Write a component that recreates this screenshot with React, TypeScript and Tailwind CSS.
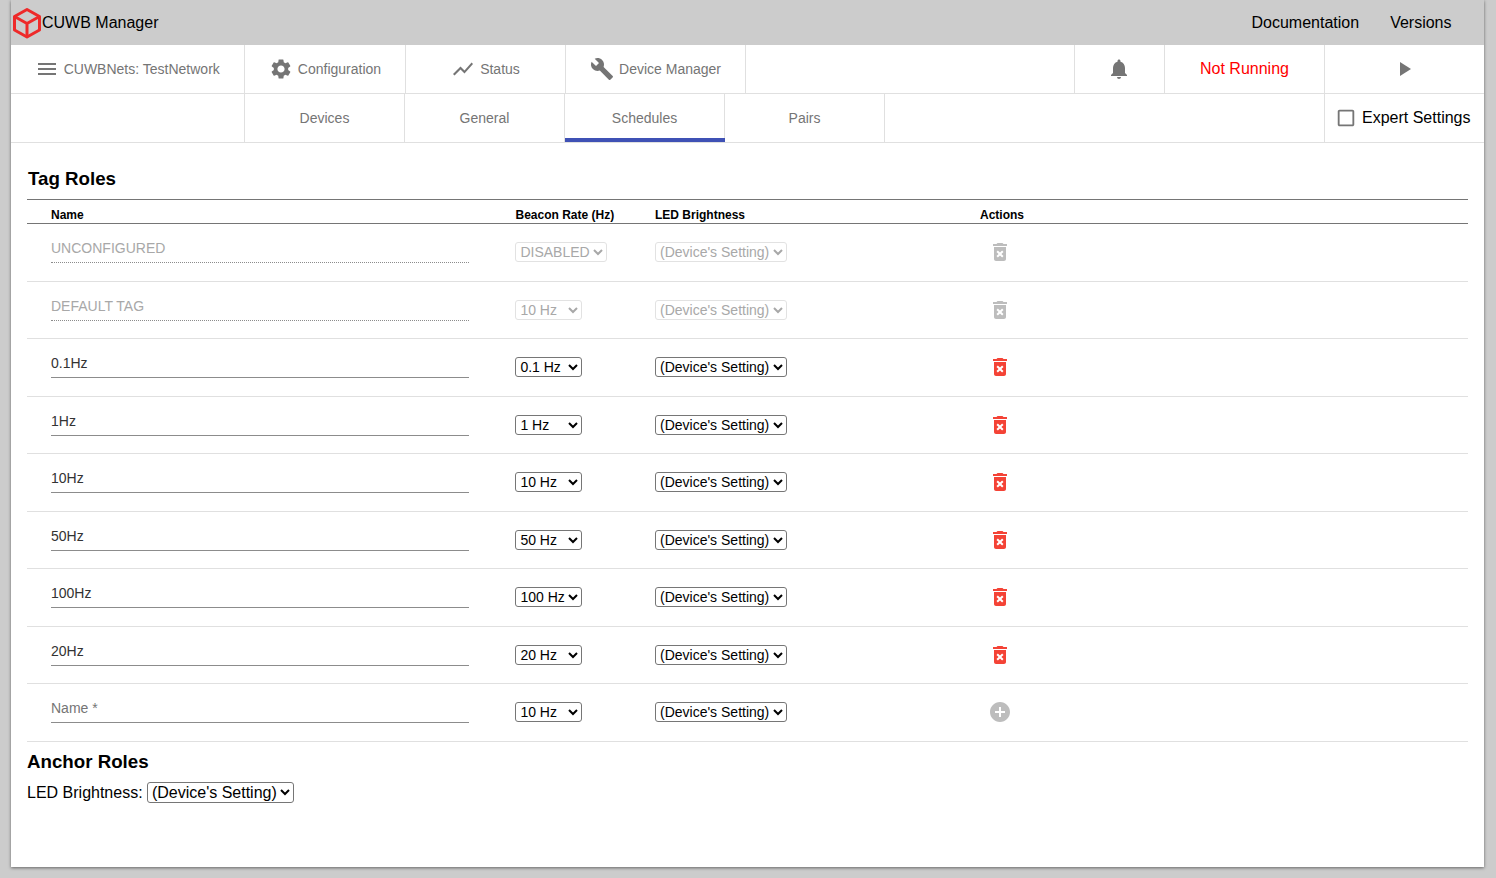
import {
  MdAddCircle,
  MdBuild,
  MdCheckBoxOutlineBlank,
  MdDeleteForever,
  MdMenu,
  MdNotifications,
  MdPlayArrow,
  MdSettings,
  MdShowChart,
} from "react-icons/md";

const RATES = ["0.1 Hz", "1 Hz", "10 Hz", "50 Hz", "100 Hz", "20 Hz"];
const LED = ["(Device's Setting)", "Off", "Low", "Medium", "High"];

const ROLES = [
  { name: "UNCONFIGURED", rate: "DISABLED", locked: true },
  { name: "DEFAULT TAG", rate: "10 Hz", locked: true },
  { name: "0.1Hz", rate: "0.1 Hz" },
  { name: "1Hz", rate: "1 Hz" },
  { name: "10Hz", rate: "10 Hz" },
  { name: "50Hz", rate: "50 Hz" },
  { name: "100Hz", rate: "100 Hz" },
  { name: "20Hz", rate: "20 Hz" },
];

function CubeLogo() {
  return (
    <svg width="30" height="32" viewBox="0 0 30 32" fill="none" stroke="#ee2a2a" strokeWidth="3" strokeLinejoin="round">
      <path d="M15 2.5 27.5 9.5V23L15 30 2.5 23V9.5Z" />
      <path d="M2.5 9.5 15 16.5 27.5 9.5M15 16.5V30" />
    </svg>
  );
}

function Select({ options, value, disabled, big }: { options: string[]; value: string; disabled?: boolean; big?: boolean }) {
  return (
    <select
      defaultValue={value}
      disabled={disabled}
      className={`border rounded-[3px] bg-white ${big ? "h-[21px] text-base" : "h-[20px] text-sm"} ${
        disabled ? "border-[#e2e2e2] text-[#a8a8a8]" : "border-[#767676] text-black"
      }`}
    >
      {options.map((o) => (
        <option key={o}>{o}</option>
      ))}
    </select>
  );
}

function NavCell({ className, children }: { className: string; children: React.ReactNode }) {
  return (
    <div className={`flex items-center justify-center border-r border-[#e0e0e0] text-[#757575] ${className}`}>
      {children}
    </div>
  );
}

function RoleRow({ name, rate, locked }: { name: string; rate: string; locked?: boolean }) {
  return (
    <div className="grid grid-cols-[488.4px_139.6px_1fr] h-[57.5px] border-b border-[#e0e0e0] items-center">
      <div className="pl-6 self-start pt-[10px]">
        <input
          defaultValue={name}
          disabled={locked}
          className={`block w-[418px] h-[29px] border-b text-sm outline-none ${
            locked ? "border-dotted border-[#8c8c8c] text-[#a8a8a8]" : "border-[#8c8c8c] text-[#333]"
          }`}
        />
      </div>
      <div className="flex">
        <Select options={locked && rate === "DISABLED" ? ["DISABLED"] : RATES} value={rate} disabled={locked} />
      </div>
      <div className="flex items-center">
        <div className="w-[325px]">
          <Select options={LED} value={LED[0]} disabled={locked} />
        </div>
        <MdDeleteForever size={24} className={`ml-[8px] ${locked ? "text-[#bdbdbd]" : "text-[#f44336]"}`} />
      </div>
    </div>
  );
}

export default function App() {
  return (
    <div className="h-[878px] bg-[#cccccc] pl-[11px] pr-[12px] font-['Liberation_Sans',Arial,sans-serif]">
      <div className="h-[867px] bg-white shadow-[0_1px_3px_rgba(0,0,0,0.5)] flex flex-col">
        {/* Title bar */}
        <div className="h-[45px] shrink-0 bg-[#cccccc] flex items-center text-base text-black">
          <div className="ml-[1px]">
            <CubeLogo />
          </div>
          <span>CUWB Manager</span>
          <div className="ml-auto flex items-center gap-[31px] pr-[32.5px]">
            <span>Documentation</span>
            <span>Versions</span>
          </div>
        </div>

        {/* Main nav */}
        <div className="h-[49px] shrink-0 flex border-b border-[#e0e0e0] text-sm">
          <NavCell className="w-[234px] gap-[4.5px]">
            <MdMenu size={24} />
            <span>CUWBNets: TestNetwork</span>
          </NavCell>
          <NavCell className="w-[161px] gap-[5px]">
            <MdSettings size={24} />
            <span>Configuration</span>
          </NavCell>
          <NavCell className="w-[160px] gap-[5px]">
            <MdShowChart size={24} />
            <span>Status</span>
          </NavCell>
          <NavCell className="w-[180px] gap-[5px]">
            <MdBuild size={24} />
            <span>Device Manager</span>
          </NavCell>
          <NavCell className="w-[329px]">{null}</NavCell>
          <NavCell className="w-[90px] pr-[1px]">
            <MdNotifications size={24} />
          </NavCell>
          <NavCell className="w-[160px] text-base !text-[#ff0000]">Not Running</NavCell>
          <NavCell className="w-[159px] border-r-0 pr-[1px]">
            <MdPlayArrow size={24} />
          </NavCell>
        </div>

        {/* Sub nav */}
        <div className="h-[49px] shrink-0 flex border-b border-[#e0e0e0] text-sm">
          <NavCell className="w-[234px]">{null}</NavCell>
          <NavCell className="w-[160px]">Devices</NavCell>
          <NavCell className="w-[160px]">General</NavCell>
          <NavCell className="w-[160px] relative">
            Schedules
            <div className="absolute left-0 right-[-1px] bottom-0 h-[4px] bg-[#3f51b5]" />
          </NavCell>
          <NavCell className="w-[160px]">Pairs</NavCell>
          <NavCell className="w-[440px]">{null}</NavCell>
          <div className="flex items-center pl-[10px] gap-[5px] text-base text-black">
            <MdCheckBoxOutlineBlank size={22} className="text-[#757575]" />
            <span>Expert Settings</span>
          </div>
        </div>

        {/* Content */}
        <div className="pl-[16px] pr-[16px]">
          <h2 className="text-[18.72px] font-bold text-black pl-[1px] pt-[24px] h-[56px] leading-[24px]">Tag Roles</h2>
          <div className="border-t border-b border-t-[#757575] border-b-[#757575] h-[25px] pt-[6px] grid grid-cols-[488.5px_139.5px_325px_1fr] items-center text-xs font-bold text-black">
            <div className="pl-6">Name</div>
            <div>Beacon Rate (Hz)</div>
            <div>LED Brightness</div>
            <div>Actions</div>
          </div>
          {ROLES.map((r) => (
            <RoleRow key={r.name} {...r} />
          ))}
          {/* New role row */}
          <div className="grid grid-cols-[488.4px_139.6px_1fr] h-[57.5px] border-b border-[#e0e0e0] items-center">
            <div className="pl-6 self-start pt-[10px]">
              <input
                placeholder="Name *"
                className="block w-[418px] h-[29px] border-b border-[#8c8c8c] text-sm outline-none placeholder:text-[#757575]"
              />
            </div>
            <div className="flex">
              <Select options={RATES} value="10 Hz" />
            </div>
            <div className="flex items-center">
              <div className="w-[325px]">
                <Select options={LED} value={LED[0]} />
              </div>
              <MdAddCircle size={24} className="ml-[8px] text-[#bdbdbd]" />
            </div>
          </div>

          <h2 className="text-[18.72px] font-bold text-black pt-[8px] leading-[24px]">Anchor Roles</h2>
          <div className="flex items-center mt-[7px] text-base text-black gap-[4.3px]">
            <span>LED Brightness:</span>
            <Select options={LED} value={LED[0]} big />
          </div>
        </div>
      </div>
    </div>
  );
}
